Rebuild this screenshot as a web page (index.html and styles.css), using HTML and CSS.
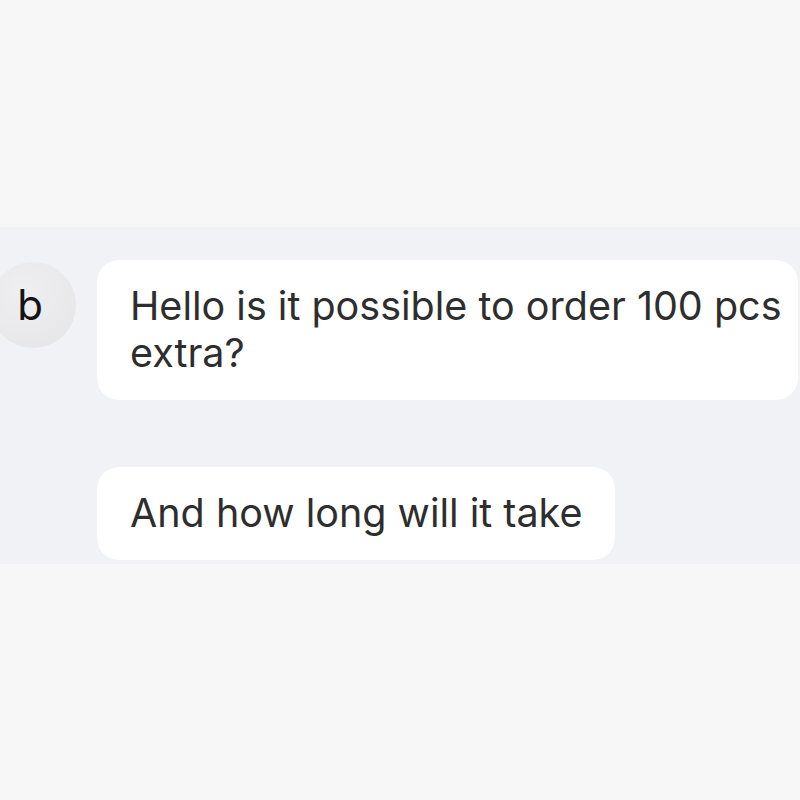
FILE: index.html
```html
<!DOCTYPE html>
<html>
<head>
<meta charset="utf-8">
<link rel="stylesheet" href="styles.css">
</head>
<body>
<div class="band">
  <div class="row">
    <div class="avatar">b</div>
    <div class="messages">
      <div class="bubble wide">Hello is it possible to order 100 pcs extra?</div>
      <div class="bubble">And how long will it take</div>
    </div>
  </div>
</div>
</body>
</html>
```
FILE: styles.css
```css
html, body {
  margin: 0;
  padding: 0;
  background: #f7f7f7;
  width: 800px;
  height: 800px;
  overflow: hidden;
  font-family: Inter, "Liberation Sans", sans-serif;
}
.band {
  margin-top: 227px;
  height: 337px;
  box-sizing: border-box;
  padding-top: 33px;
  background: #f1f2f5;
}
.row {
  display: flex;
  align-items: flex-start;
  gap: 21px;
}
.avatar {
  flex: none;
  width: 86px;
  height: 86px;
  margin-left: -10px;
  margin-top: 2px;
  border-radius: 50%;
  background: radial-gradient(circle at 40% 35%, #efeff1 0%, #e8e8eb 70%, #e2e2e6 100%);
  display: flex;
  align-items: center;
  justify-content: center;
  padding-right: 6px;
  box-sizing: border-box;
  font-size: 42px;
  color: #141414;
  line-height: 1;
}
.messages {
  display: flex;
  flex-direction: column;
  align-items: flex-start;
  gap: 67px;
}
.bubble {
  background: #ffffff;
  border-radius: 22px;
  padding: 23px 33px;
  font-size: 39.5px;
  line-height: 47px;
  color: #2e2e2e;
}
.bubble.wide {
  width: 701px;
  box-sizing: border-box;
  padding-right: 10px;
}
```
